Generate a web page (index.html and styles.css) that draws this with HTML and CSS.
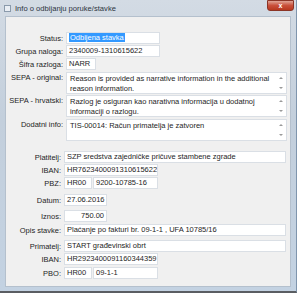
FILE: index.html
```html
<!DOCTYPE html>
<html>
	<head>
		<meta charset="utf-8">
		<title>Info o odbijanju poruke/stavke</title>
		<link rel="stylesheet" href="styles.css">
	</head>
	<body>
		<div class="window">
			<div class="titlebar">
				<span class="app-icon"></span>
				<span class="title">Info o odbijanju poruke/stavke</span>
				<span class="close">x</span>
			</div>
			<main class="client">
				<section class="group first">
					<div class="row"><label>Status:</label><div class="field w-mid"><span class="sel">Odbijena stavka</span></div></div>
					<div class="row"><label>Grupa naloga:</label><div class="field w-mid">2340009-1310615622</div></div>
					<div class="row"><label>Šifra razloga:</label><div class="field w-xs">NARR</div></div>
					<div class="row multi gap2"><label>SEPA - original:</label>
						<div class="field area">Reason is provided as narrative information in the additional reason information.<span class="scroll"><i class="up"></i><i class="down"></i></span></div>
					</div>
					<div class="row multi"><label>SEPA - hrvatski:</label>
						<div class="field area">Razlog je osiguran kao narativna informacija u dodatnoj informaciji o razlogu.<span class="scroll"><i class="up"></i><i class="down"></i></span></div>
					</div>
					<div class="row multi gap2"><label>Dodatni info:</label>
						<div class="field area">TIS-00014: Račun primatelja je zatvoren<span class="scroll"><i class="up"></i><i class="down"></i></span></div>
					</div>
				</section>
				<section class="group second">
					<div class="row"><label>Platitelj:</label><div class="field w-full">SZP sredstva zajedničke pričuve stambene zgrade</div></div>
					<div class="row"><label>IBAN:</label><div class="field w-mid">HR7623400091310615622</div></div>
					<div class="row"><label>PBZ:</label><div class="field w-model">HR00</div><div class="field w-ref">9200-10785-16</div></div>
					<div class="row gap5"><label>Datum:</label><div class="field w-date">27.06.2016</div></div>
					<div class="row gap4"><label>Iznos:</label><div class="field w-date num">750.00</div></div>
					<div class="row gap2"><label>Opis stavke:</label><div class="field w-full">Plaćanje po fakturi br. 09-1-1 , UFA 10785/16</div></div>
					<div class="row gap4"><label>Primatelj:</label><div class="field w-full">START građevinski obrt</div></div>
					<div class="row"><label>IBAN:</label><div class="field w-mid">HR2923400091160344359</div></div>
					<div class="row gap2"><label>PBO:</label><div class="field w-model">HR00</div><div class="field w-ref">09-1-1</div></div>
				</section>
			</main>
		</div>
	</body>
</html>
```
FILE: styles.css
```css
* {
	margin: 0;
	padding: 0;
	box-sizing: border-box;
}
body {
	background: #fff;
	font-family: "Liberation Sans", Arial, sans-serif;
	font-size: 7.5px;
	color: #1e1e1e;
}
.window {
	width: 297px;
	height: 293px;
	padding: 0 5px 4px 5px;
	background: linear-gradient(#d3dbe4, #c3cfdc 40%, #c3d2e2);
	border-bottom: 2px solid #5a5d62;
	border-right: 1px solid #7f95ad;
	display: flex;
	flex-direction: column;
}
.titlebar {
	height: 16px;
	display: flex;
	align-items: flex-start;
	position: relative;
}
.app-icon {
	width: 7px;
	height: 7px;
	margin: 5px 4px 0 -1px;
	border: 1px solid #8a9aab;
	background: #e9eef4;
}
.title {
	margin-top: 4px;
	font-size: 7.6px;
	color: #2c3440;
}
.close {
	position: absolute;
	right: -3px;
	top: 0;
	width: 27px;
	height: 11px;
	border-radius: 0 0 3px 3px;
	background: linear-gradient(#e0a496, #c9503b 50%, #b8381f);
	border: 1px solid #8b3426;
	color: #fff;
	font-weight: bold;
	font-size: 7px;
	text-align: center;
	line-height: 9px;
}
.client {
	flex: 1;
	background: #f0f0f0;
	border: 1px solid #b4c0cd;
	padding-top: 15px;
}
.group {
	display: flex;
	flex-direction: column;
	gap: 1px;
}
.second {
	margin-top: 10px;
}
.row {
	display: flex;
	align-items: center;
	height: 12px;
}
.row label {
	text-align: right;
	padding-right: 3px;
	flex-shrink: 0;
}
.first label {
	width: 60px;
}
.second label {
	width: 58px;
}
.gap2 { margin-top: 1px; }
.gap3 { margin-top: 2px; }
.gap4 { margin-top: 3px; }
.gap5 { margin-top: 4px; }
.field {
	height: 12px;
	background: #fff;
	border: 1px solid #dadfe5;
	padding: 0 2px;
	line-height: 10px;
	white-space: nowrap;
	overflow: hidden;
}
.sel {
	background: #3399ff;
	color: #fff;
	padding: 0 1px;
}
.w-mid { width: 94px; }
.w-xs { width: 30px; }
.w-full { width: 222px; }
.w-date { width: 43px; }
.w-model { width: 28px; margin-right: 1px; }
.w-ref { width: 65px; }
.num { text-align: right; }
.row.multi {
	height: 22px;
	align-items: flex-start;
}
.multi label {
	padding-top: 1px;
}
.field.area {
	width: 221px;
	height: 22px;
	white-space: normal;
	line-height: 10px;
	padding: 1px 14px 0 3px;
	position: relative;
}
.scroll {
	position: absolute;
	right: 0;
	top: 0;
	bottom: 0;
	width: 10px;
}
.scroll i {
	position: absolute;
	left: 3px;
	border-left: 2px solid transparent;
	border-right: 2px solid transparent;
}
.scroll .up {
	top: 4px;
	border-bottom: 2px solid #9a9a9a;
}
.scroll .down {
	bottom: 4px;
	border-top: 2px solid #9a9a9a;
}
```
